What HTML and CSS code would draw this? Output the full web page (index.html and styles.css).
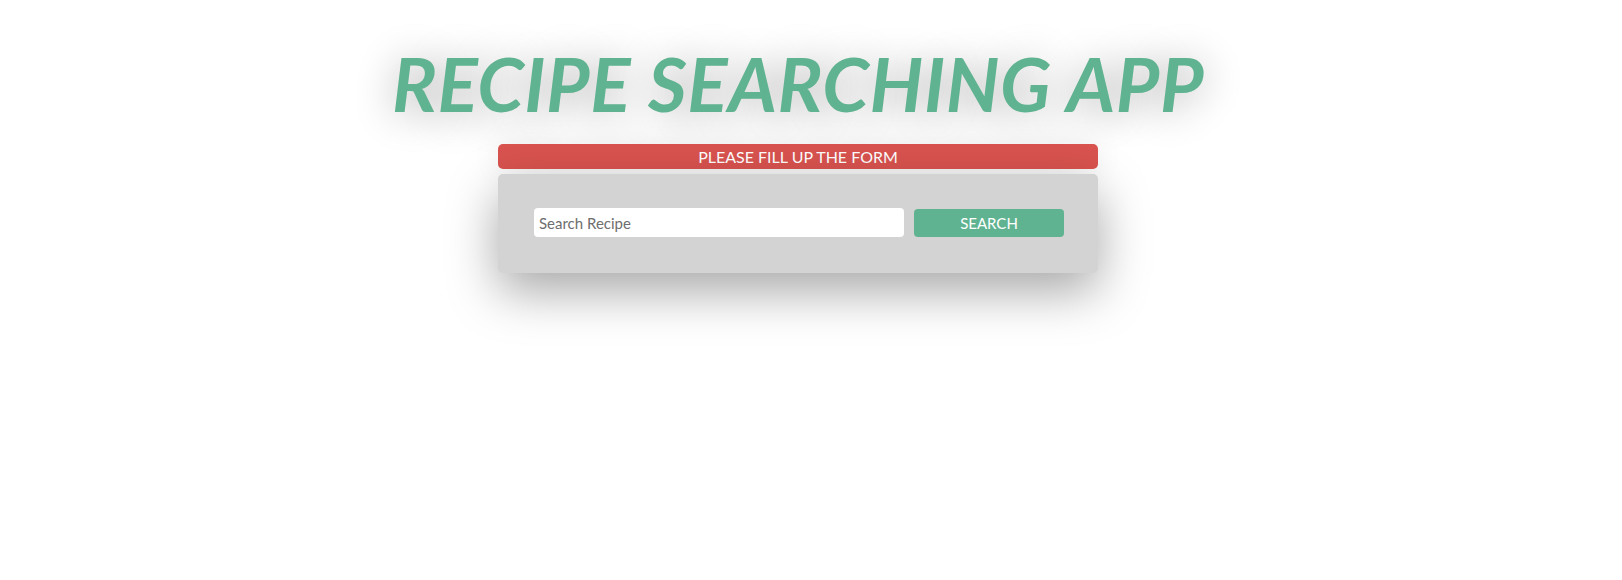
FILE: index.html
```html
<!DOCTYPE html>
<html lang="en">
<head>
<meta charset="utf-8">
<title>Recipe Searching App</title>
<link rel="stylesheet" href="styles.css">
</head>
<body>
<div class="app">
  <h1 class="title">RECIPE SEARCHING APP</h1>
  <div class="panel">
    <div class="alert">PLEASE FILL UP THE FORM</div>
    <form class="search-form">
      <input class="search-input" type="text" placeholder="Search Recipe">
      <button class="search-btn" type="button">SEARCH</button>
    </form>
  </div>
</div>
</body>
</html>
```

FILE: styles.css
```css
* { box-sizing: border-box; }
html, body { margin: 0; padding: 0; background: #fff; }
body {
  font-family: Lato, "Open Sans", sans-serif;
  min-height: 100vh;
}

.app {
  min-height: 100vh;
  display: flex;
  flex-direction: column;
  align-items: center;
  padding: 38px 26px 0 0;
}

.title {
  margin: 0;
  font-size: 75px;
  line-height: 90px;
  font-weight: 700;
  font-style: italic;
  letter-spacing: 0.6px;
  color: #60b391;
  text-shadow: 0 4px 40px rgba(0, 0, 0, 0.32);
}

.panel {
  width: 600px;
  margin-top: 16px;
  display: flex;
  flex-direction: column;
  gap: 5px;
}

.alert {
  height: 25px;
  line-height: 26px;
  background: #d9534f;
  color: #fff;
  border-radius: 5px;
  text-align: center;
  font-size: 16px;
  box-shadow: 0 0 30px rgba(0, 0, 0, 0.08);
}

.search-form {
  margin: 0;
  height: 99px;
  background: #d3d3d3;
  border-radius: 5px;
  padding: 0 34px 2px 36px;
  display: flex;
  align-items: center;
  gap: 10px;
  box-shadow: 0 18px 50px rgba(0, 0, 0, 0.35);
}

.search-input {
  width: 370px;
  height: 29px;
  border: none;
  border-radius: 4px;
  background: #fff;
  padding: 0 5px;
  font-family: Lato, sans-serif;
  font-size: 15px;
  color: #333;
  outline: none;
}
.search-input::placeholder { color: #6e6e6e; }

.search-btn {
  width: 150px;
  height: 28px;
  margin-top: 1px;
  border: none;
  border-radius: 4px;
  background: #60b391;
  color: #fff;
  font-family: Lato, sans-serif;
  font-size: 15px;
  cursor: pointer;
}
```
